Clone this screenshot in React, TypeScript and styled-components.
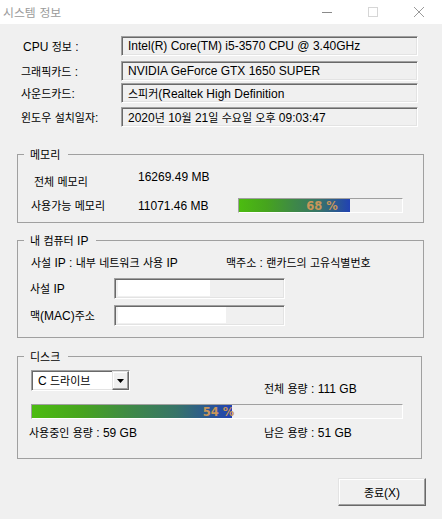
import React from 'react'
import styled, { createGlobalStyle } from 'styled-components'

const GlobalStyle = createGlobalStyle`
  html, body {
    margin: 0;
    padding: 0;
    background: #f0f0f0;
  }
  body {
    font-family: "Liberation Sans", "Noto Sans CJK KR", sans-serif;
    font-size: 12px;
    color: #000;
  }
`

// Hangul runs get the CJK face at a smaller size so they keep Malgun Gothic widths
const HANGUL = /([\u1100-\u11ff\u3130-\u318f\uac00-\ud7af]+)/

const Hangul = styled.span`
  font-family: "Noto Sans CJK KR", sans-serif;
  font-size: 0.915em;
`

const T = ({ children }: { children: string }) => (
  <>
    {children.split(HANGUL).map((part, i) =>
      i % 2 ? <Hangul key={i}>{part}</Hangul> : <React.Fragment key={i}>{part}</React.Fragment>
    )}
  </>
)

const Window = styled.div`
  width: 442px;
  height: 519px;
  display: flex;
  flex-direction: column;
  background: #f0f0f0;
  overflow: hidden;
`

const TitleBar = styled.div`
  height: 24px;
  flex: none;
  background: #fff;
  display: flex;
  align-items: center;
`

const Caption = styled.div`
  flex: 1;
  padding-left: 3px;
  color: #9a9a9a;
  font-size: 13px;
  line-height: 24px;
`

const Control = styled.div`
  width: 46px;
  height: 24px;
  display: flex;
  align-items: center;
  justify-content: center;
`

const InfoRow = styled.div<{ $gap: number }>`
  display: grid;
  grid-template-columns: 100px 297px;
  align-items: center;
  height: 20px;
  margin-top: ${(p) => p.$gap}px;
  padding-left: 21px;
`

const Label = styled.div<{ $indent?: number; $pt?: number }>`
  padding-left: ${(p) => p.$indent || 0}px;
  padding-top: ${(p) => p.$pt || 0}px;
  line-height: 16px;
  white-space: nowrap;
`

const Sunken = styled.div`
  box-sizing: border-box;
  border-top: 1px solid #a0a0a0;
  border-left: 1px solid #a0a0a0;
  border-right: 1px solid #fff;
  border-bottom: 1px solid #fff;
  box-shadow: inset 1px 1px 0 #696969, inset -1px -1px 0 #e3e3e3;
`

const ReadBox = styled(Sunken)`
  height: 20px;
  padding-left: 6px;
  line-height: 18px;
  white-space: nowrap;
  overflow: hidden;
`

const Group = styled.fieldset<{ $gap: number; $w: number; $pb: number }>`
  box-sizing: border-box;
  width: ${(p) => p.$w}px;
  min-width: 0;
  margin: ${(p) => p.$gap}px 0 0 17px;
  padding: 0 0 ${(p) => p.$pb}px 0;
  border: 1px solid #a0a0a0;
`

const Legend = styled.legend`
  margin-left: 6px;
  padding: 0 8px 0 6px;
  line-height: 16px;
`

const MemRow = styled.div<{ $gap: number; $h: number; $align: string }>`
  display: grid;
  grid-template-columns: 107px 100px 165px;
  align-items: ${(p) => p.$align};
  height: ${(p) => p.$h}px;
  margin-top: ${(p) => p.$gap}px;
  padding-left: 13px;
`

const Bar = styled.div<{ $w: number }>`
  position: relative;
  box-sizing: border-box;
  width: ${(p) => p.$w}px;
  height: 15px;
  border-top: 1px solid #a0a0a0;
  border-left: 1px solid #a0a0a0;
  border-right: 1px solid #fff;
  border-bottom: 1px solid #fff;
  background: #f0f0f0;
`

const Fill = styled.div`
  height: 100%;
  background: linear-gradient(90deg, #4cbc10 0%, #46a41e 25%, #3e8848 50%, #377468 72%, #2d5c8c 86%, #2142b4 100%);
`

const BarText = styled.div`
  position: absolute;
  inset: 0;
  display: flex;
  align-items: center;
  justify-content: center;
  padding-left: 3px;
  font-family: "DejaVu Sans", sans-serif;
  font-weight: bold;
  font-size: 11.5px;
  color: #c8965a;
`

const Progress = ({ pct, width }: { pct: number; width: number }) => (
  <Bar $w={width}>
    <Fill style={{ width: `${pct}%` }} />
    <BarText>{pct} %</BarText>
  </Bar>
)

const TwoCol = styled.div<{ $gap: number; $col: number; $indent: number }>`
  display: grid;
  grid-template-columns: ${(p) => p.$col}px auto;
  margin-top: ${(p) => p.$gap}px;
  padding-left: ${(p) => p.$indent}px;
  line-height: 16px;
  white-space: nowrap;
`

const IpRow = styled.div<{ $gap: number }>`
  display: grid;
  grid-template-columns: 84px 171px;
  align-items: center;
  height: 21px;
  margin-top: ${(p) => p.$gap}px;
  padding-left: 12px;
`

const IpBox = styled(Sunken)`
  height: 21px;
  padding: 1px 3px;
`

const Mask = styled.div<{ $w: number }>`
  width: ${(p) => p.$w}px;
  height: 16px;
  background: #fff;
`

const DiskTop = styled.div`
  display: grid;
  grid-template-columns: 233px auto;
  align-items: start;
  margin-top: 5px;
  padding-left: 13px;
`

const Combo = styled(Sunken)`
  width: 99px;
  height: 21px;
  display: flex;
  background: #fff;
`

const ComboText = styled.div`
  flex: 1;
  padding-left: 6px;
  line-height: 19px;
`

const ComboButton = styled.div`
  box-sizing: border-box;
  width: 17px;
  height: 19px;
  display: flex;
  align-items: center;
  justify-content: center;
  background: #f0f0f0;
  border-top: 1px solid #e3e3e3;
  border-left: 1px solid #e3e3e3;
  border-right: 1px solid #696969;
  border-bottom: 1px solid #696969;
  box-shadow: inset -1px -1px 0 #a0a0a0, inset 1px 1px 0 #fff;
`

const BarRow = styled.div`
  margin-top: 7px;
  padding-left: 13px;
`

const Footer = styled.div`
  display: flex;
  margin-top: 19px;
  padding-left: 338px;
`

const Button = styled.button`
  box-sizing: border-box;
  width: 88px;
  height: 28px;
  padding: 0;
  font: inherit;
  color: #000;
  background: #f0f0f0;
  border-top: 1px solid #e3e3e3;
  border-left: 1px solid #e3e3e3;
  border-right: 1px solid #696969;
  border-bottom: 1px solid #696969;
  box-shadow: inset -1px -1px 0 #a0a0a0, inset 1px 1px 0 #fff;
`

const info: [string, string, number, number][] = [
  ['CPU 정보 :', 'Intel(R) Core(TM) i5-3570 CPU @ 3.40GHz', 12, 2],
  ['그래픽카드 :', 'NVIDIA GeForce GTX 1650 SUPER', 5, 0],
  ['사운드카드:', '스피커(Realtek High Definition', 2, 0],
  ['윈도우 설치일자:', '2020년 10월 21일 수요일 오후 09:03:47', 4, 0],
]

export default function App() {
  return (
    <Window>
      <GlobalStyle />
      <TitleBar>
        <Caption>
          <T>시스템 정보</T>
        </Caption>
        <Control>
          <svg width="10" height="10" viewBox="0 0 10 10">
            <line x1="0" y1="5.5" x2="10" y2="5.5" stroke="#8a8a8a" strokeWidth="1" />
          </svg>
        </Control>
        <Control>
          <svg width="10" height="10" viewBox="0 0 10 10">
            <rect x="0.5" y="0.5" width="9" height="9" fill="none" stroke="#d6d6d6" strokeWidth="1" />
          </svg>
        </Control>
        <Control>
          <svg width="10" height="10" viewBox="0 0 10 10">
            <path d="M0 0 L10 10 M10 0 L0 10" stroke="#9a9a9a" strokeWidth="1" />
          </svg>
        </Control>
      </TitleBar>

      {info.map(([label, value, gap, indent]) => (
        <InfoRow key={label} $gap={gap}>
          <Label $indent={indent}>
            <T>{label}</T>
          </Label>
          <ReadBox>
            <T>{value}</T>
          </ReadBox>
        </InfoRow>
      ))}

      <Group $gap={19} $w={407} $pb={9}>
        <Legend>
          <T>메모리</T>
        </Legend>
        <MemRow $gap={6} $h={20} $align="start">
          <Label $indent={3} $pt={4}>
            <T>전체 메모리</T>
          </Label>
          <Label>16269.49 MB</Label>
        </MemRow>
        <MemRow $gap={8} $h={16} $align="center">
          <Label>
            <T>사용가능 메모리</T>
          </Label>
          <Label>11071.46 MB</Label>
          <Progress pct={68} width={165} />
        </MemRow>
      </Group>

      <Group $gap={9} $w={407} $pb={11}>
        <Legend>
          <T>내 컴퓨터 IP</T>
        </Legend>
        <TwoCol $gap={5} $col={195} $indent={13}>
          <div>
            <T>사설 IP : 내부 네트워크 사용 IP</T>
          </div>
          <div>
            <T>맥주소 : 랜카드의 고유식별번호</T>
          </div>
        </TwoCol>
        <IpRow $gap={7}>
          <Label>
            <T>사설 IP</T>
          </Label>
          <IpBox>
            <Mask $w={92} />
          </IpBox>
        </IpRow>
        <IpRow $gap={6}>
          <Label $indent={-1}>
            <T>맥(MAC)주소</T>
          </Label>
          <IpBox>
            <Mask $w={108} />
          </IpBox>
        </IpRow>
      </Group>

      <Group $gap={10} $w={405} $pb={17}>
        <Legend>
          <T>디스크</T>
        </Legend>
        <DiskTop>
          <Combo>
            <ComboText>
              <T>C 드라이브</T>
            </ComboText>
            <ComboButton>
              <svg width="7" height="4" viewBox="0 0 7 4">
                <path d="M0 0 H7 L3.5 4 Z" fill="#000" />
              </svg>
            </ComboButton>
          </Combo>
          <Label $pt={10}>
            <T>전체 용량 : 111 GB</T>
          </Label>
        </DiskTop>
        <BarRow>
          <Progress pct={54} width={372} />
        </BarRow>
        <TwoCol $gap={5} $col={235} $indent={11}>
          <div>
            <T>사용중인 용량 : 59 GB</T>
          </div>
          <div>
            <T>남은 용량 : 51 GB</T>
          </div>
        </TwoCol>
      </Group>

      <Footer>
        <Button>
          <T>종료(X)</T>
        </Button>
      </Footer>
    </Window>
  )
}
